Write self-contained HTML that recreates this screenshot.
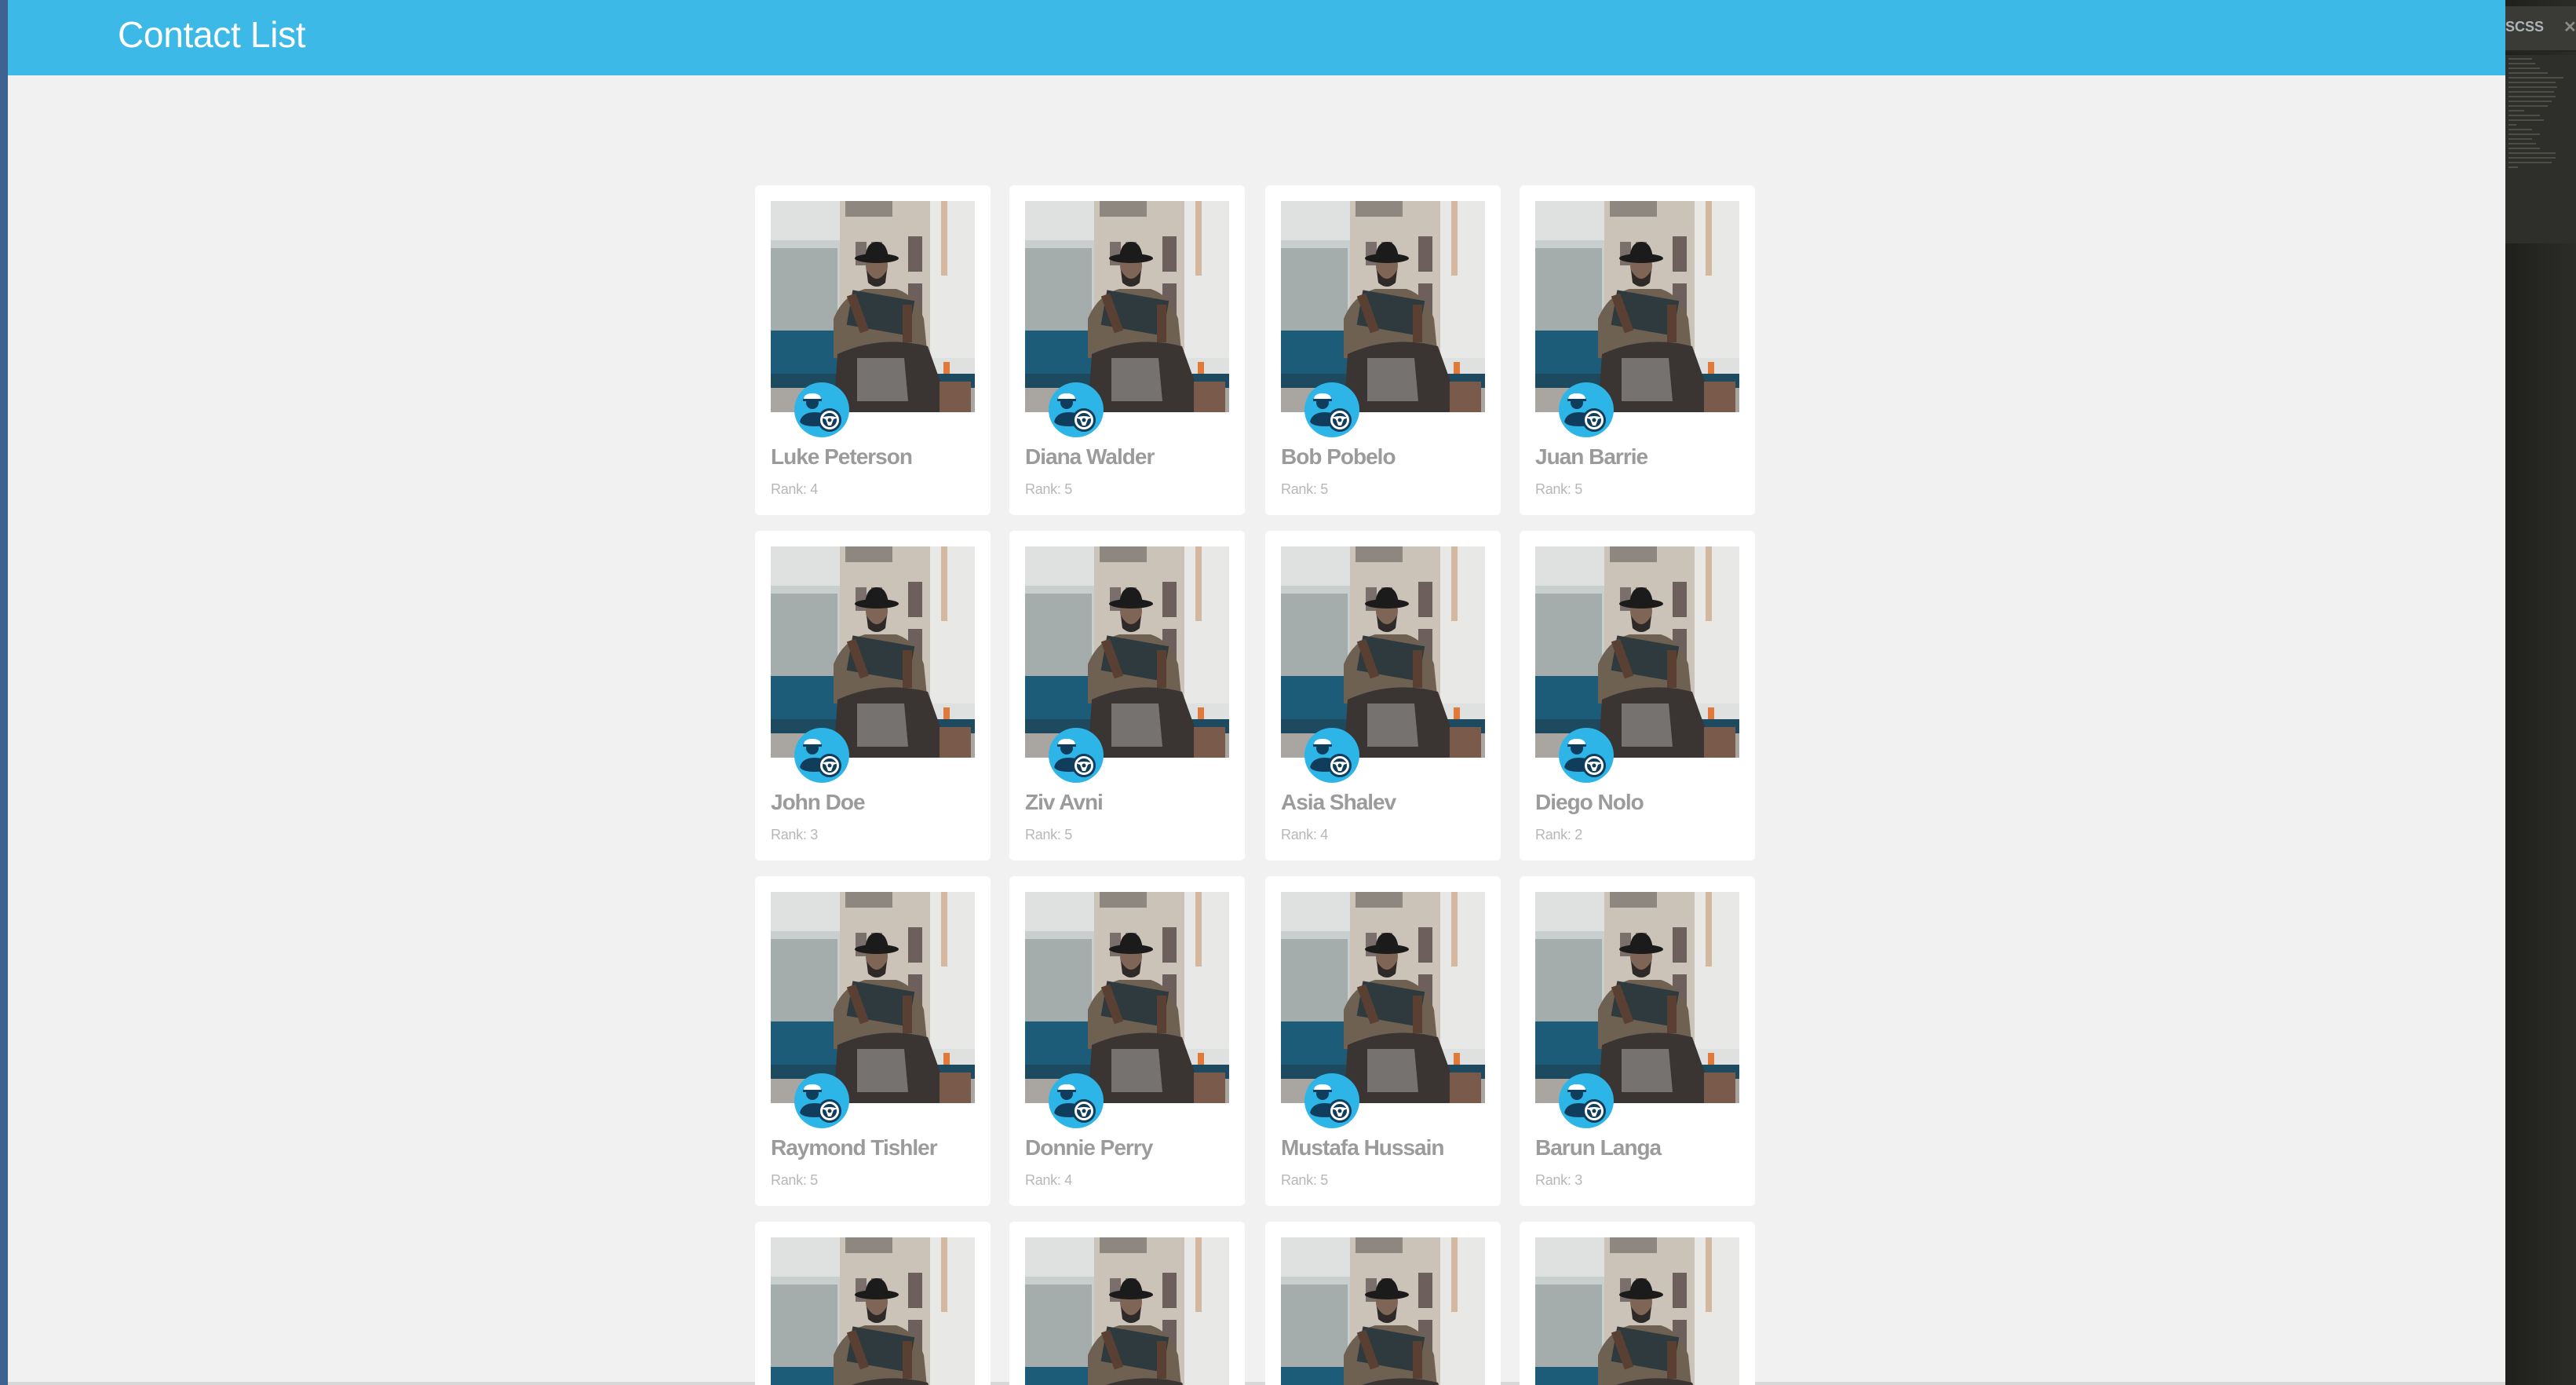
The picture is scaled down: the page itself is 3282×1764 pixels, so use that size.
<!DOCTYPE html>
<html><head><meta charset="utf-8">
<style>
*{margin:0;padding:0;box-sizing:border-box}
html,body{width:3282px;height:1764px;overflow:hidden;background:#f1f1f1;font-family:"Liberation Sans",sans-serif;position:relative}
.lstrip{position:absolute;left:0;top:0;width:10px;height:1764px;background:#3e6291}
.header{position:absolute;left:10px;top:0;width:3182px;height:96px;background:#3cb9e6}
.header h1{position:absolute;left:140px;top:17px;font-weight:normal;color:#fff;font-size:46px;letter-spacing:-0.3px}
.panel{position:absolute;left:3192px;top:0;width:90px;height:1764px;background:linear-gradient(90deg,#1f201d,#2c2c28)}
.tab{position:absolute;left:0;top:8px;width:90px;height:58px;background:#3a3a37;border-bottom:2px solid #242422}
.tab span{position:absolute;left:0;top:16px;color:#aeb4b8;font-size:18px;font-weight:bold}
.tab b{position:absolute;left:74px;top:14px;color:#8a8a8a;font-size:20px}
.code{position:absolute;left:0;top:70px;width:90px;height:240px;background:#2e2e2b}
.code i{display:block;height:2px;margin:4px 0 0 4px;background:#6d6d66;opacity:.5}
.bline{position:absolute;left:10px;top:1760px;width:3182px;height:4px;background:#d8d8d8}
.card{position:absolute;width:300px;height:420px;background:#fff;border-radius:6px;overflow:hidden}
.card svg.ph{position:absolute;left:20px;top:20px;width:260px;height:269px}
.card svg.bd{position:absolute;left:50px;top:251px;width:70px;height:70px}
.nm{position:absolute;left:20px;top:330px;font-size:28px;color:#9b9b9b;font-weight:bold;letter-spacing:-1px;white-space:nowrap}
.rk{position:absolute;left:20px;top:377px;font-size:18px;color:#b7b7b7;letter-spacing:-0.3px}
</style></head><body>
<div class="lstrip"></div>
<div class="header"><h1>Contact List</h1></div>
<div class="panel"><div class="tab"><span>SCSS</span><b>✕</b></div>
<div class="code"><i style="width:30px"></i><i style="width:34px"></i><i style="width:40px"></i><i style="width:50px"></i><i style="width:70px"></i><i style="width:60px"></i><i style="width:62px"></i><i style="width:58px"></i><i style="width:60px"></i><i style="width:55px"></i><i style="width:50px"></i><i style="width:20px"></i><i style="width:40px"></i><i style="width:45px"></i><i style="width:10px"></i><i style="width:30px"></i><i style="width:40px"></i><i style="width:30px"></i><i style="width:35px"></i><i style="width:40px"></i><i style="width:60px"></i><i style="width:60px"></i><i style="width:55px"></i><i style="width:12px"></i></div></div>
<div class="bline"></div>
<svg width="0" height="0" style="position:absolute">
<defs>
<symbol id="photo" viewBox="0 0 260 269">
<rect width="260" height="269" fill="#dfe1e1"/>
<rect x="0" y="50" width="90" height="140" fill="#c9cfcf"/>
<rect x="0" y="60" width="85" height="125" fill="#a4adac"/>
<rect x="88" y="0" width="115" height="200" fill="#cbc3b8"/>
<rect x="95" y="0" width="60" height="20" fill="#8d8780"/>
<rect x="108" y="52" width="14" height="30" fill="#7a6f6b"/>
<rect x="128" y="52" width="14" height="30" fill="#7a6f6b"/>
<rect x="175" y="45" width="18" height="45" fill="#6d5f5c"/>
<rect x="175" y="105" width="18" height="40" fill="#6d5f5c"/>
<rect x="203" y="0" width="57" height="200" fill="#e8e8e6"/>
<rect x="217" y="0" width="8" height="95" fill="#d3b79e"/>
<rect x="0" y="165" width="100" height="55" fill="#1d5c78"/>
<rect x="0" y="220" width="260" height="18" fill="#1d4a5e"/>
<rect x="0" y="238" width="260" height="31" fill="#a9a6a1"/>
<path d="M80 150 Q92 120 120 112 L160 112 Q185 120 195 150 L200 200 L80 200 Z" fill="#6e6152"/>
<path d="M85 195 Q140 170 200 185 L230 269 L80 269 Z" fill="#3a3433"/>
<path d="M110 200 L170 200 L175 255 L110 255Z" fill="#767270"/>
<rect x="100" y="120" width="80" height="45" transform="rotate(10 140 142)" fill="#2f3a3e"/>
<rect x="105" y="118" width="12" height="50" transform="rotate(-20 111 143)" fill="#5a4033"/>
<rect x="168" y="132" width="12" height="48" fill="#5a4033"/>
<ellipse cx="135" cy="82" rx="14" ry="20" fill="#7e6556"/>
<path d="M122 88 Q135 110 148 88 L146 104 Q135 114 124 104Z" fill="#2e2a27"/>
<ellipse cx="135" cy="73" rx="28" ry="6" fill="#1b1b1b"/>
<path d="M120 73 Q122 52 135 52 Q148 52 150 73Z" fill="#1b1b1b"/>
<rect x="215" y="230" width="40" height="39" fill="#7a5a4a"/>
<rect x="220" y="205" width="8" height="15" fill="#e07a3a"/>
</symbol>
<symbol id="badge" viewBox="0 0 70 70">
<circle cx="35" cy="35" r="35" fill="#2db5e8"/>
<clipPath id="cc"><circle cx="35" cy="35" r="35"/></clipPath>
<g clip-path="url(#cc)">
<circle cx="23" cy="26" r="8" fill="#103d5b"/>
<path d="M12 22 Q12 14 23 14 Q34 14 34 22 Z" fill="#fff"/>
<rect x="11" y="21" width="24" height="3" fill="#103d5b"/>
<path d="M7 50 Q10 38 26 38 Q42 38 44 50 Q42 56 26 56 Q10 56 7 50Z" fill="#103d5b"/>
<circle cx="45" cy="48" r="15" fill="#103d5b"/>
<circle cx="45" cy="48" r="10.5" fill="none" stroke="#fff" stroke-width="3"/>
<path d="M35 45 Q45 41 55 45 L50 47 L47 55 L43 55 L40 47Z" fill="#fff"/>
<circle cx="45" cy="48" r="2.5" fill="#103d5b"/>
</g>
</symbol>
</defs></svg>
<div id="grid"></div>
<script>
var names=[["Luke Peterson",4],["Diana Walder",5],["Bob Pobelo",5],["Juan Barrie",5],["John Doe",3],["Ziv Avni",5],["Asia Shalev",4],["Diego Nolo",2],["Raymond Tishler",5],["Donnie Perry",4],["Mustafa Hussain",5],["Barun Langa",3],["",0],["",0],["",0],["",0]];
var xs=[962,1286,1612,1936],ys=[236,676,1116,1556],h="";
for(var i=0;i<16;i++){var n=names[i];var r=Math.floor(i/4);
h+='<div class="card" style="left:'+xs[i%4]+'px;top:'+ys[r]+'px'+(r==3?';height:208px;border-radius:6px 6px 0 0':'')+'"><svg class="ph"><use href="#photo"/></svg>'+(n[0]?'<svg class="bd"><use href="#badge"/></svg><div class="nm">'+n[0]+'</div><div class="rk">Rank: '+n[1]+'</div>':'')+'</div>';}
document.getElementById('grid').innerHTML=h;
</script>
</body></html>
